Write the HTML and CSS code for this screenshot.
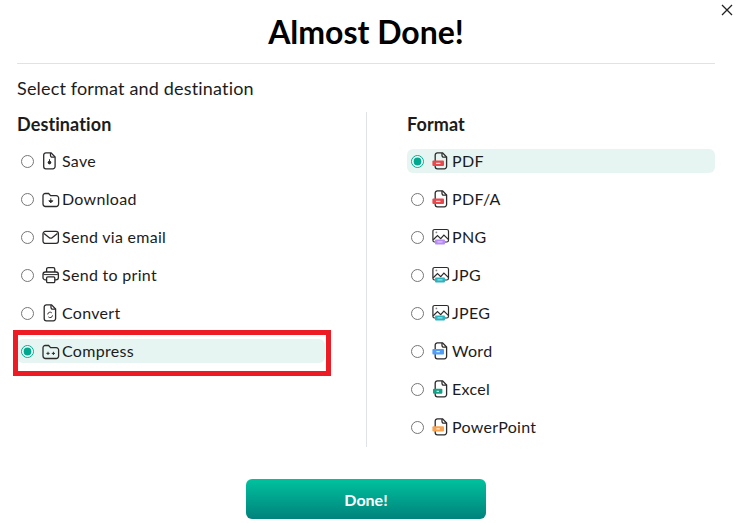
FILE: index.html
```html
<!DOCTYPE html>
<html lang="en">

<head>
    <meta charset="UTF-8">
    <meta name="viewport" content="width=device-width, initial-scale=1.0">
    <title>Almost Done!</title>
    <link rel="stylesheet" href="styles.css">
</head>

<body>
<svg class="defs" width="0" height="0" aria-hidden="true">
    <symbol id="file" viewBox="0 0 18 18">
        <path d="M5.4.8h5.2L14.6 5v9.6a2.2 2.2 0 0 1-2.2 2.2h-7a2.2 2.2 0 0 1-2.2-2.2V3a2.2 2.2 0 0 1 2.2-2.2z" fill="none" stroke="currentColor" stroke-width="1.3"/>
        <path d="M10 1v2.6a1.6 1.6 0 0 0 1.6 1.6h2.8" fill="none" stroke="currentColor" stroke-width="1.3"/>
    </symbol>
    <symbol id="folder" viewBox="0 0 18 18">
        <path d="M3.2 3.5h3.4l2 2.2h5.6a2.4 2.4 0 0 1 2.4 2.4v6a2.4 2.4 0 0 1-2.4 2.4H3.4A2.4 2.4 0 0 1 1 14.100V5.700a2.200 2.200 0 0 1 2.200-2.200z" fill="none" stroke="currentColor" stroke-width="1.3"/>
    </symbol>
    <symbol id="image" viewBox="0 0 18 18">
        <rect x=".9" y="1.500" width="15.600" height="12.500" rx="1.800" fill="none" stroke="currentColor" stroke-width="1.200"/>
        <path d="M1.200 11.800l4.300-4.200 3.200 3 3.200-3.600 4.400 4.400" fill="none" stroke="currentColor" stroke-width="1.200"/>
        <circle cx="4.400" cy="4.400" r=".9" fill="#888"/>
    </symbol>
</svg>

<button type="button" class="close-btn" aria-label="Close">
    <svg width="12" height="12" viewBox="0 0 12 12"><path d="M1 1l10 10M11 1L1 11" stroke="#222" stroke-width="1.3"/></svg>
</button>

<div class="dialog">
    <h1>Almost Done!</h1>
    <p class="subtitle">Select format and destination</p>

    <div class="columns">
        <div class="column">
            <h2>Destination</h2>
            <label class="option">
                <input type="radio" name="destination">
                <svg class="icon" viewBox="0 0 18 18"><use href="#file" x="-1.500"/><circle cx="7.500" cy="10.600" r="1.800" fill="currentColor"/><path d="M7.500 7.200v3" stroke="currentColor"/></svg>
                <span>Save</span>
            </label>
            <label class="option">
                <input type="radio" name="destination">
                <svg class="icon" viewBox="0 0 18 18"><use href="#folder"/><path d="M6.800 10.800l2 2 2-2z" fill="currentColor" stroke="currentColor"/><path d="M8.800 8.200v3" stroke="currentColor"/></svg>
                <span>Download</span>
            </label>
            <label class="option">
                <input type="radio" name="destination">
                <svg class="icon" viewBox="0 0 18 18"><rect x="1" y="3.400" width="15.400" height="12" rx="2.400" fill="none" stroke="currentColor" stroke-width="1.300"/><path d="M2 5.400l5 4a2.600 2.600 0 0 0 3.400 0l5-4" fill="none" stroke="currentColor" stroke-width="1.300"/></svg>
                <span>Send via email</span>
            </label>
            <label class="option">
                <input type="radio" name="destination">
                <svg class="icon" viewBox="0 0 18 18"><path d="M4.600 6V3.200a1.600 1.600 0 0 1 1.600-1.600h5a1.600 1.600 0 0 1 1.600 1.600V6" fill="none" stroke="currentColor" stroke-width="1.300"/><rect x="1" y="6" width="15.400" height="7.800" rx="2.400" fill="none" stroke="currentColor" stroke-width="1.300"/><rect x="4.600" y="10.800" width="8.200" height="5.800" rx="1.200" fill="#fff" stroke="currentColor" stroke-width="1.300"/><path d="M1.600 8.600h14.200" stroke="currentColor"/></svg>
                <span>Send to print</span>
            </label>
            <label class="option">
                <input type="radio" name="destination">
                <svg class="icon" viewBox="0 0 18 18"><use href="#file" x="-1"/><path d="M5.700 10.400a2.400 2.400 0 0 1 4.100-1.500M10.500 11.400a2.400 2.400 0 0 1-4.100 1.500" fill="none" stroke="currentColor"/></svg>
                <span>Convert</span>
            </label>
            <label class="option selected">
                <input type="radio" name="destination" checked>
                <svg class="icon" viewBox="0 0 18 18"><use href="#folder"/><path d="M4.400 11.400h3.200M6 9.800V13M9.800 11.400H13M11.400 9.800V13" stroke="currentColor"/></svg>
                <span>Compress</span>
            </label>
        </div>

        <div class="divider"></div>

        <div class="column">
            <h2>Format</h2>
            <label class="option selected plain">
                <input type="radio" name="format" checked>
                <svg class="icon" viewBox="0 0 18 18"><use href="#file"/><rect x=".4" y="8.600" width="11.600" height="5.400" rx="1" fill="#e5484d"/><rect x="4" y="10.800" width="4.400" height="1" fill="#fff"/></svg>
                <span>PDF</span>
            </label>
            <label class="option">
                <input type="radio" name="format">
                <svg class="icon" viewBox="0 0 18 18"><use href="#file"/><rect x=".4" y="8.600" width="11.600" height="5.400" rx="1" fill="#e5484d"/><rect x="4" y="10.800" width="4.400" height="1" fill="#fff"/></svg>
                <span>PDF/A</span>
            </label>
            <label class="option">
                <input type="radio" name="format">
                <svg class="icon" viewBox="0 0 18 18"><use href="#image"/><rect x="3" y="11.600" width="10" height="4.800" rx="1" fill="#b78af5"/><rect x="5.500" y="13.400" width="5" height="1" fill="#e8dbfc"/></svg>
                <span>PNG</span>
            </label>
            <label class="option">
                <input type="radio" name="format">
                <svg class="icon" viewBox="0 0 18 18"><use href="#image"/><rect x="3" y="11.600" width="10" height="4.800" rx="1" fill="#2bb3c0"/><rect x="5.500" y="13.400" width="5" height="1" fill="#bfe9ed"/></svg>
                <span>JPG</span>
            </label>
            <label class="option">
                <input type="radio" name="format">
                <svg class="icon" viewBox="0 0 18 18"><use href="#image"/><rect x="3" y="11.600" width="10" height="4.800" rx="1" fill="#2bb3c0"/><rect x="5.500" y="13.400" width="5" height="1" fill="#bfe9ed"/></svg>
                <span>JPEG</span>
            </label>
            <label class="option">
                <input type="radio" name="format">
                <svg class="icon" viewBox="0 0 18 18"><use href="#file"/><rect x=".4" y="7" width="11.600" height="5.400" rx="1" fill="#4f9df5"/><rect x="4.400" y="9.200" width="3.400" height="1" fill="#fff"/></svg>
                <span>Word</span>
            </label>
            <label class="option">
                <input type="radio" name="format">
                <svg class="icon" viewBox="0 0 18 18"><use href="#file"/><rect x="1" y="8.800" width="9.400" height="5" rx="1" fill="#17a085"/><rect x="4.600" y="10.800" width="2.400" height="1" fill="#fff"/></svg>
                <span>Excel</span>
            </label>
            <label class="option">
                <input type="radio" name="format">
                <svg class="icon" viewBox="0 0 18 18"><use href="#file"/><rect x=".4" y="8.200" width="11.600" height="5.400" rx="1" fill="#f7a24f"/><rect x="4.400" y="10.400" width="3.400" height="1" fill="#fff"/></svg>
                <span>PowerPoint</span>
            </label>
        </div>
    </div>

    <div class="actions">
        <button type="button" class="done-btn">Done!</button>
    </div>
</div>
</body>

</html>
```

FILE: styles.css
```css
body {
    font-family: "Lato", "Open Sans", sans-serif;
    background-color: #fff;
    color: #1c1c1c;
    margin: 0;
    padding: 0;
}

.defs {
    display: block;
}

.dialog {
    width: 698px;
    margin-left: 17px;
}

h1 {
    margin: 0;
    padding-top: 12px;
    box-sizing: border-box;
    border-bottom: 1px solid #e0e3e5;
    height: 64px;
    text-align: center;
    font-size: 32px;
    line-height: 40px;
    font-weight: 700;
    color: #000;
}

.subtitle {
    margin: 12px 0 0;
    font-size: 18px;
    line-height: 24px;
    letter-spacing: 0.17px;
}

.columns {
    display: grid;
    grid-template-columns: 1fr 1px 1fr;
    column-gap: 40.5px;
    margin-top: 12px;
    height: 335px;
}

.divider {
    background-color: #e0e3e5;
}

h2 {
    margin: 0 0 13px;
    font-size: 18px;
    line-height: 24px;
    font-weight: 700;
    letter-spacing: 0.1px;
}

.option {
    position: relative;
    display: flex;
    align-items: center;
    height: 24px;
    margin-bottom: 14px;
    padding-left: 4px;
    border-radius: 6px;
    font-size: 16px;
    letter-spacing: 0.3px;
}

.option:last-child {
    margin-bottom: 0;
}

.option input {
    width: 13px;
    height: 13px;
    margin: 0 8px 0 0;
    accent-color: #00a88f;
}

.option span {
    margin-bottom: 2px;
}

.icon {
    width: 18px;
    height: 18px;
    margin-right: 2px;
    color: #2b2b2b;
}

.selected {
    background-color: #e6f5f1;
}

/* red annotation box around the chosen destination */
.selected:not(.plain)::after {
    content: "";
    position: absolute;
    top: -9px;
    left: -4px;
    right: -6px;
    bottom: -13px;
    border: 5px solid #ed1c24;
    pointer-events: none;
}

.actions {
    display: flex;
    justify-content: center;
    margin-top: 32px;
}

.done-btn {
    width: 240px;
    height: 40px;
    border: none;
    border-radius: 6px;
    background: linear-gradient(#00c29e, #00827c);
    color: #fff;
    font-family: inherit;
    font-size: 16px;
    font-weight: 700;
}

.close-btn {
    position: absolute;
    top: 4px;
    left: 721px;
    padding: 0;
    border: none;
    background: none;
    line-height: 0;
}
```
